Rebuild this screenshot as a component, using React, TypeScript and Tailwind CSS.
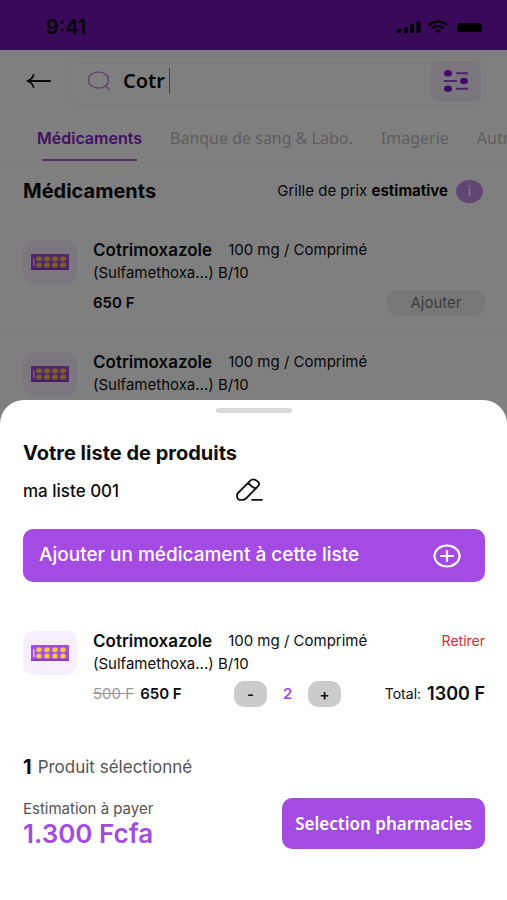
import React, { useState } from "react";
import clsx from "clsx";

interface IProduct {
  id: string;
  name: string;
  dose: string;
  details: string;
  price: number;
  oldPrice?: number;
}

const PRODUCTS: IProduct[] = [
  { id: "1", name: "Cotrimoxazole", dose: "100 mg / Comprimé", details: "(Sulfamethoxa...) B/10", price: 650 },
  { id: "2", name: "Cotrimoxazole", dose: "100 mg / Comprimé", details: "(Sulfamethoxa...) B/10", price: 650 },
];

const SELECTED: IProduct = { ...PRODUCTS[0], oldPrice: 500 };

const TABS = ["Médicaments", "Banque de sang & Labo.", "Imagerie", "Autres"];

const PillsIcon = () => (
  <div className="flex h-11 w-[54px] shrink-0 items-center justify-center rounded-[10px] bg-[#f8effe]">
    <svg width="38" height="16" viewBox="0 0 38 16" aria-hidden="true">
      <rect width="38" height="16" rx="1" fill="#a04fdb" />
      <rect y="14" width="38" height="2" fill="#8a3cc4" />
      <path d="M2.800 4v8" stroke="#ecd8fa" strokeWidth="1.200" />
      {[8, 16, 24, 32].map((x) => (
        <g key={x} fill="#f8c552" stroke="#e0a060" strokeWidth="0.5">
          <ellipse cx={x} cy="4.800" rx="2.800" ry="2.300" />
          <ellipse cx={x} cy="11" rx="2.800" ry="2.300" />
        </g>
      ))}
    </svg>
  </div>
);

const StatusBar = () => (
  <div className="flex h-[50px] items-center justify-between bg-[#7212b4] pt-1 pr-[19px] pl-[46px]">
    <span className="text-xl leading-6 font-semibold">9:41</span>
    <svg width="92" height="14" viewBox="0 0 92 14" aria-hidden="true">
      <rect x="1" y="9" width="4" height="4" rx="1" />
      <rect x="8" y="7" width="4" height="6" rx="1" />
      <rect x="14" y="4" width="4" height="9" rx="1" />
      <rect x="20.500" y="1.500" width="4" height="11.500" rx="1" />
      <path d="M32.500 5.200q9.500-7 19 0M36 8.300q6-4.200 12 0" fill="none" stroke="#000" strokeWidth="2.200" />
      <path d="M38.800 10.500q3.200-2 6.400 0L42 13z" />
      <rect x="61" y="3" width="25" height="9" rx="2.500" />
      <path d="M89 5.500q2 2 0 4z" opacity="0.5" />
    </svg>
  </div>
);

const SearchRow = () => (
  <div className="flex items-center pt-[7px] pr-[22px] pl-[26px]">
    <button aria-label="Retour" className="mr-[15px] flex h-8 w-[25px] items-center">
      <svg width="25" height="16" viewBox="0 0 25 16" fill="none" stroke="#111" strokeWidth="1.800" strokeLinecap="round" strokeLinejoin="round">
        <path d="M24 8H1.500M7.500 2C6.500 5 4.500 7 1.500 8c3 1 5 3 6 6" />
      </svg>
    </button>
    <div className="flex h-12 flex-1 items-center rounded-xl border border-[#f4f0f6] pr-[3px] pl-5">
      <label htmlFor="search" aria-label="Rechercher">
        <svg width="24" height="20" viewBox="0 0 24 20" fill="none" stroke="#bb8fdb" strokeWidth="1.500" strokeLinecap="round">
          <ellipse cx="11.500" cy="9" rx="10" ry="8" />
          <path d="M18.500 15l4 3.500" />
        </svg>
      </label>
      <input
        id="search"
        defaultValue="Cotr"
        className="ml-3 field-sizing-content bg-transparent font-['Noto_Sans',sans-serif] text-xl font-semibold outline-none"
      />
      <span className="ml-1 h-[26px] w-px bg-[#888]" />
      <button aria-label="Filtres" className="ml-auto flex h-10 w-[50px] items-center justify-center rounded-lg bg-[#f6ecfb]">
        <svg width="26" height="22" viewBox="0 0 26 22" fill="#8217cd" stroke="#9a45d6" strokeWidth="2">
          <path d="M13 3.300H25M1 11h13M13 18.700H25" />
          <g stroke="none">
            <ellipse cx="5" cy="3.300" rx="4" ry="3.200" />
            <ellipse cx="21" cy="11" rx="4" ry="3.200" />
            <ellipse cx="5" cy="18.700" rx="4" ry="3.200" />
          </g>
        </svg>
      </button>
    </div>
  </div>
);

const ProductTitle: React.FC<{ product: IProduct }> = ({ product }) => (
  <div className="flex h-5 items-center gap-4 whitespace-nowrap leading-5">
    <h3 className="text-[17px] font-semibold">{product.name}</h3>
    <span className="text-[15px]">{product.dose}</span>
  </div>
);

const ProductRow: React.FC<{ product: IProduct }> = ({ product }) => (
  <li className="flex h-28 gap-4 border-b border-[#f9f9f9] pt-4 pr-[22px] pl-[23px]">
    <PillsIcon />
    <div className="min-w-0 flex-1">
      <ProductTitle product={product} />
      <p className="mt-[3px] text-[15px] leading-5">{product.details}</p>
      <div className="mt-[7px] flex items-center justify-between">
        <span className="text-[15px] font-semibold">{product.price} F</span>
        <button className="h-[26px] w-[98px] rounded-[10px] bg-[#efefef] text-[15px] text-[#777]">Ajouter</button>
      </div>
    </div>
  </li>
);

const Catalog = () => {
  const [activeTab, setActiveTab] = useState(TABS[0]);

  return (
    <main className="bg-white">
      <SearchRow />
      <nav className="mt-4 flex gap-7 overflow-hidden border-b border-[#f9f9f9] pl-[37px] whitespace-nowrap">
        {TABS.map((tab) => (
          <button
            key={tab}
            onClick={() => setActiveTab(tab)}
            className={clsx(
              "relative h-10 shrink-0 pb-[6px] text-base",
              activeTab === tab ? "font-semibold text-[#8420c9]" : "font-['Noto_Sans',sans-serif] text-[#bdbdbd]"
            )}
          >
            {tab}
            {activeTab === tab && <span className="absolute right-[5px] bottom-0 left-[5px] h-[2px] bg-[#a866d6]" />}
          </button>
        ))}
      </nav>
      <div className="flex items-center justify-between pt-[17px] pr-6 pb-[21px] pl-[23px]">
        <h2 className="text-xl leading-6 font-bold">Médicaments</h2>
        <div className="flex items-center gap-2">
          <p className="text-[15px] leading-6">
            Grille de prix <strong className="font-bold">estimative</strong>
          </p>
          <button aria-label="Informations" className="h-[23px] w-[27px] rounded-[50%] bg-[#c18fe6] text-sm leading-none text-white">
            i
          </button>
        </div>
      </div>
      <ul>
        {PRODUCTS.map((product) => (
          <ProductRow key={product.id} product={product} />
        ))}
      </ul>
    </main>
  );
};

const SelectedProduct: React.FC<{ product: IProduct }> = ({ product }) => {
  const [count, setCount] = useState(2);

  return (
    <div className="mt-[49px] flex gap-4">
      <PillsIcon />
      <div className="min-w-0 flex-1">
        <div className="flex items-center justify-between">
          <ProductTitle product={product} />
          <button className="text-sm leading-5 text-[#dc2637]">Retirer</button>
        </div>
        <p className="mt-[3px] text-[15px] leading-5">{product.details}</p>
        <div className="mt-[7px] flex items-center whitespace-nowrap">
          <div className="flex w-[36%] gap-[6px] text-[15px]">
            <s className="text-[#999]">{product.oldPrice} F</s>
            <span className="font-semibold">{product.price} F</span>
          </div>
          <div className="flex items-center text-[15px] font-semibold">
            <button
              aria-label="Diminuer"
              onClick={() => setCount(Math.max(1, count - 1))}
              className="h-[26px] w-[33px] rounded-[10px] bg-[#cbcbcb] leading-none"
            >
              -
            </button>
            <span className="w-[41px] text-center text-[#a24be3]">{count}</span>
            <button
              aria-label="Augmenter"
              onClick={() => setCount(count + 1)}
              className="h-[26px] w-[33px] rounded-[10px] bg-[#cbcbcb] leading-none"
            >
              +
            </button>
          </div>
          <p className="ml-auto flex h-[26px] items-center gap-[6px]">
            <span className="text-sm">Total:</span>
            <span className="text-lg font-semibold">{product.price * count} F</span>
          </p>
        </div>
      </div>
    </div>
  );
};

const ProductListSheet = () => (
  <section className="rounded-t-[24px] bg-white pt-2 pr-[22px] pb-[51px] pl-[23px]">
    <div className="mx-auto h-[5px] w-[76px] rounded-full bg-[#d9d9d9]" />
    <h2 className="mt-[26px] text-xl leading-7 font-bold">Votre liste de produits</h2>
    <div className="mt-[11px] flex h-7 items-center">
      <span className="w-[46%] text-[17px] font-medium">ma liste 001</span>
      <button aria-label="Renommer la liste">
        <svg width="27" height="24" viewBox="0 0 27 24" fill="none" stroke="#111" strokeWidth="1.800" strokeLinecap="round" strokeLinejoin="round" className="-mt-1">
          <path d="M1.500 15.500L14 2.800q2.800-2.500 5.500-.8l2.200 1.500q2.800 2 .4 4.700L10 20.500q-1.500 1.300-3.500 1.300H3.300q-1.600 0-1.800-1.600l-.5-2.500q0-1.300.5-2.200zM12.500 5q2.500 4 7.500 5.500M16 21.800h10" />
        </svg>
      </button>
    </div>
    <button className="mt-[23px] flex h-[53px] w-full items-center justify-between rounded-[10px] bg-[#a44be3] pr-6 pl-4 text-[19px] font-medium whitespace-nowrap text-white">
      Ajouter un médicament à cette liste
      <svg width="28" height="24" viewBox="0 0 28 24" fill="none" stroke="currentColor" strokeWidth="2.200" strokeLinecap="round">
        <ellipse cx="14" cy="12" rx="12.500" ry="10.500" />
        <path d="M14 7v10M8 12h12" />
      </svg>
    </button>
    <SelectedProduct product={SELECTED} />
    <p className="mt-12 flex items-center gap-[6px] leading-6">
      <strong className="text-xl leading-6 font-bold">1</strong>
      <span className="text-[17px] text-[#555]">Produit sélectionné</span>
    </p>
    <div className="mt-[19px] flex items-center justify-between">
      <div>
        <p className="text-[15px] leading-5 text-[#555]">Estimation à payer</p>
        <p className="text-[26px] leading-[30px] font-semibold text-[#a44be3]">1.300 Fcfa</p>
      </div>
      <button className="h-[51px] rounded-[10px] bg-[#a44be3] px-[13px] font-['Noto_Sans',sans-serif] text-[17px] font-semibold text-white">
        Selection pharmacies
      </button>
    </div>
  </section>
);

const App = () => (
  <div className="relative h-screen overflow-hidden bg-white font-['Inter',sans-serif] text-[#0d0d0d]">
    <StatusBar />
    <Catalog />
    <div className="absolute inset-0 flex flex-col justify-end bg-black/50">
      <ProductListSheet />
    </div>
  </div>
);

export default App;
